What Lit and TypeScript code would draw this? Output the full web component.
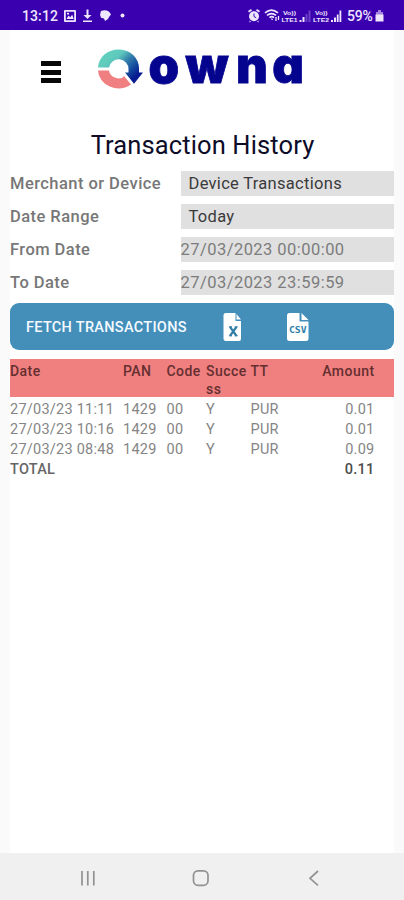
import { LitElement, html, css } from "lit";
import { customElement } from "lit/decorators.js";

interface Row {
  date: string;
  pan: string;
  code: string;
  success: string;
  type: string;
  amount: string;
}

@customElement("status-bar")
class StatusBar extends LitElement {
  static styles = css`
    :host { display: flex; align-items: center; height: 30px; box-sizing: border-box; padding: 2px 20px 0 22px; background: #3a00b0; color: #eee6ff; font: 500 14px/28px Roboto, sans-serif; }
    .time { width: 42px; letter-spacing: 0.1px; }
    .left { width: 66px; height: 16px; }
    .right { width: 96px; height: 16px; margin-left: auto; }
    .pct { width: 28px; font-size: 14px; letter-spacing: -0.2px; margin-left: 5px; }
    .bat { width: 9px; height: 14px; }
    svg { display: block; }
    .tiny { font: 700 6px "Liberation Sans", sans-serif; }
  `;
  render() {
    return html`
      <span class="time">13:12</span>
      <svg class="left" viewBox="64 8 66 16" fill="#eee6ff">
        <path fill-rule="evenodd" d="M65 10h10q1 0 1 1v10q0 1-1 1H65q-1 0-1-1V11q0-1 1-1zM65.800 11.800v8.400h8.400v-8.400zM66.500 19l2-3.500 1.700 1.700 2-2.500 1.600 4.300zM67 12.800h2v1.600h-2z"/>
        <path d="M86.500 9.500h2v5.500h3l-4 4-4-4h3zM83 20.500h9v1.500h-9z"/>
        <path d="M101 11q4-1.500 7 0 2 1 3 3.500l-2 2.500-1 2-3 2-1-2.500-3-.8-1-3z"/>
        <circle cx="122.500" cy="15.500" r="2"/>
      </svg>
      <svg class="right" viewBox="246 8 96 16" fill="#eee6ff">
        <circle cx="254" cy="16.200" r="5"/>
        <path d="M248 11l3-2 1 1.500-3 2zM260 11l-3-2-1 1.500 3 2zM249.500 20.500l1.500 1-1.500 1zM258.500 20.500l-1.500 1 1.500 1z"/>
        <path d="M254 13.500v3l2.200 1.300" stroke="#3a00b0" fill="none"/>
        <path d="M265 12.800q6.500-5.500 13 0M267 15.300q4.500-3.500 9 0M269.500 17.600q2.200-1.800 4.500 0" stroke="#eee6ff" stroke-width="1.700" fill="none"/>
        <path d="M271.500 18.500l1 1.500M276 17v4M278.500 16v4" stroke="#eee6ff" stroke-width="1.300" fill="none"/>
        <text class="tiny" x="283" y="14.600" textLength="13" lengthAdjust="spacingAndGlyphs">Vo))</text>
        <text class="tiny" x="281.500" y="22" textLength="16" lengthAdjust="spacingAndGlyphs">LTE1</text>
        <path d="M299.500 20h2v2h-2zM302.500 17h2v5h-2z"/>
        <path opacity=".28" d="M305.500 14h2v8h-2zM308.500 10.500h2v11.500h-2z"/>
        <text class="tiny" x="315" y="14.600" textLength="12.500" lengthAdjust="spacingAndGlyphs">Vo))</text>
        <text class="tiny" x="313" y="22" textLength="16" lengthAdjust="spacingAndGlyphs">LTE2</text>
        <path d="M331 20h2v2h-2zM334 17.500h2v4.500h-2zM336.800 14.500h1.800v7.500h-1.800zM339.500 10.500h1.800v11.500h-1.800z"/>
      </svg>
      <span class="pct">59%</span>
      <svg class="bat" viewBox="0 0 9 14">
        <path fill="#a383df" d="M1 3h7v4H1zM3 1h3v2H3z"/><path fill="#eee6ff" d="M.5 5.500h8v7h-8z"/>
      </svg>`;
  }
}

@customElement("brand-header")
class BrandHeader extends LitElement {
  static styles = css`
    :host { display: flex; align-items: center; height: 84px; box-sizing: border-box; padding-left: 31px; }
    .menu { display: grid; gap: 3.500px; width: 20px; margin-right: 36px; }
    .menu i { height: 5px; background: #080808; }
    .logo { display: block; width: 216px; height: 84px; }
    .word { font: 900 49px Inter, sans-serif; font-feature-settings: "cv11"; stroke: #04048f; stroke-width: 0.800px; }
  `;
  render() {
    return html`
      <span class="menu"><i></i><i></i><i></i></span>
      <svg class="logo" viewBox="97 30 216 84">
        <defs>
          <linearGradient id="g" gradientUnits="userSpaceOnUse" x1="113" y1="54" x2="135" y2="77">
            <stop offset="0" stop-color="#60cdbd"/><stop offset=".18" stop-color="#5cc5bc"/><stop offset=".45" stop-color="#347fac"/><stop offset=".75" stop-color="#13499c"/><stop offset="1" stop-color="#061b90"/>
          </linearGradient>
        </defs>
        <path fill="url(#g)" d="M98 67.500A20.500 18.500 0 0 1 139 68.500V72.500H143L134 83.800 125 72.500H128.500V69A9.800 9.500 0 0 0 109 67.500z"/>
        <path fill="#ef7f80" d="M98 70.500H109A10 9 0 0 0 122 78L124 76 131 84.500A20.500 18.500 0 0 1 98 70.500z"/>
        <text class="word" x="148.600 185.400 236 272.300" y="82.700" fill="#04048f">owna</text>
      </svg>`;
  }
}

@customElement("filter-form")
class FilterForm extends LitElement {
  static styles = css`
    :host { display: grid; gap: 10px; font: 16.500px/23px Roboto, sans-serif; }
    .row { display: grid; grid-template-columns: 170.500px 1fr; height: 23px; }
    .label { font-weight: 500; color: #777; letter-spacing: 0.450px; line-height: 25px; white-space: nowrap; }
    .value { background: #e0e0e0; color: #7c7c7c; line-height: 25px; white-space: nowrap; letter-spacing: 0.450px; }
    .select { color: #3a3a3a; padding-left: 8px; letter-spacing: 0.300px; }
  `;
  render() {
    const rows: [string, string, boolean][] = [
      ["Merchant or Device", "Device Transactions", true],
      ["Date Range", "Today", true],
      ["From Date", "27/03/2023 00:00:00", false],
      ["To Date", "27/03/2023 23:59:59", false],
    ];
    return rows.map(
      ([l, v, s]) => html`<div class="row"><span class="label">${l}</span><span class="value ${s ? "select" : ""}">${v}</span></div>`
    );
  }
}

@customElement("fetch-bar")
class FetchBar extends LitElement {
  static styles = css`
    :host { display: flex; align-items: center; height: 47px; box-sizing: border-box; padding-left: 16px; border-radius: 9px; background: #438fba; color: #f4faff; font: 500 14.500px/20px Roboto, sans-serif; }
    .text { width: 196px; letter-spacing: 0.3px; padding-top: 2px; white-space: nowrap; }
    .xls { width: 20px; height: 28px; margin-right: 45px; }
    .csv { width: 22px; height: 28px; }
    .c { font: 700 9px "DejaVu Sans Mono", monospace; }
  `;
  render() {
    return html`
      <span class="text">FETCH TRANSACTIONS</span>
      <svg class="xls" viewBox="0 0 20 28">
        <path fill="#fff" d="M4 0h9.500v8H19v18q0 2-2 2H4q-2.500 0-2.500-2V2Q1.500 0 4 0zM14.500 1l4.500 5.500h-4.500z"/>
        <path d="M8 13.800l6.500 9M14.500 13.800l-6.500 9" stroke="#2f7ea8" stroke-width="2.300" fill="none"/><path d="M7 13.800h3M12.700 13.800h3M7 22.800h3M12.700 22.800h3" stroke="#2f7ea8" fill="none"/>
      </svg>
      <svg class="csv" viewBox="0 0 22 28">
        <path fill="#fff" d="M2.500 0H12.500v8.500H21.500v17q0 2.500-2.500 2.500h-16.500Q0 28 0 25.500v-23Q0 0 2.500 0zM14.500 0L21.500 7h-7z"/>
        <text class="c" x="2" y="20" textLength="17.500" lengthAdjust="spacingAndGlyphs" fill="#2f7ea8">CSV</text>
      </svg>`;
  }
}

@customElement("transaction-table")
class TransactionTable extends LitElement {
  static styles = css`
    :host { display: block; font: 14.500px/20.300px Roboto, sans-serif; color: #858585; }
    .row { display: grid; grid-template-columns: 113px 43.500px 39.500px 44.500px 60px 64px; white-space: nowrap; letter-spacing: 0.25px; }
    .head { background: #f08080; color: #652f30; font-weight: 500; font-size: 14px; line-height: 18px; height: 35px; padding-top: 3px; margin-bottom: 2.500px; letter-spacing: 0.450px; }
    .amount { text-align: right; }
    .total { font-weight: 500; color: #666; }
    .total .amount { grid-column: 6; color: #4c4c4c; }
  `;
  rows: Row[] = [
    { date: "27/03/23 11:11", pan: "1429", code: "00", success: "Y", type: "PUR", amount: "0.01" },
    { date: "27/03/23 10:16", pan: "1429", code: "00", success: "Y", type: "PUR", amount: "0.01" },
    { date: "27/03/23 08:48", pan: "1429", code: "00", success: "Y", type: "PUR", amount: "0.09" },
  ];
  render() {
    return html`
      <div class="row head">
        <span>Date</span><span>PAN</span><span>Code</span><span>Succe<br />ss</span><span>TT</span><span class="amount">Amount</span>
      </div>
      ${this.rows.map(
        (r) => html`<div class="row">
          <span>${r.date}</span><span>${r.pan}</span><span>${r.code}</span><span>${r.success}</span><span>${r.type}</span><span class="amount">${r.amount}</span>
        </div>`
      )}
      <div class="row total"><span>TOTAL</span><span class="amount">0.11</span></div>`;
  }
}

@customElement("nav-bar")
class NavBar extends LitElement {
  static styles = css`
    :host { display: flex; align-items: center; justify-content: space-between; height: 47px; box-sizing: border-box; padding: 3px 81px 0 79px; background: #f0f0f0; }
    svg { display: block; width: 18px; height: 18px; fill: none; stroke: #929292; stroke-width: 1.700; }
  `;
  render() {
    return html`
      <svg viewBox="0 0 18 18"><path d="M3 2v14.500M8.800 2v14.500M14.800 2v14.500"/></svg>
      <svg viewBox="0 0 18 18"><rect x="1.500" y="1.800" width="14.500" height="14.500" rx="4.500"/></svg>
      <svg viewBox="0 0 18 18"><path d="M13 2L5 9.300l8 7"/></svg>`;
  }
}

@customElement("app-root")
class AppRoot extends LitElement {
  static styles = css`
    :host { display: flex; flex-direction: column; height: 900px; overflow: hidden; background: #fafafa; font-family: Roboto, sans-serif; }
    main { flex: 1; margin: 0 10px; background: #fff; }
    h1 { margin: 0 0 11px; padding-left: 1px; height: 46px; font: 400 25.500px/62px Roboto, sans-serif; letter-spacing: 0.120px; text-align: center; color: #0c0c28; }
    fetch-bar { margin: 10px 0 9px; }
  `;
  render() {
    return html`
      <status-bar></status-bar>
      <main>
        <brand-header></brand-header>
        <h1>Transaction History</h1>
        <filter-form></filter-form>
        <fetch-bar></fetch-bar>
        <transaction-table></transaction-table>
      </main>
      <nav-bar></nav-bar>`;
  }
}
